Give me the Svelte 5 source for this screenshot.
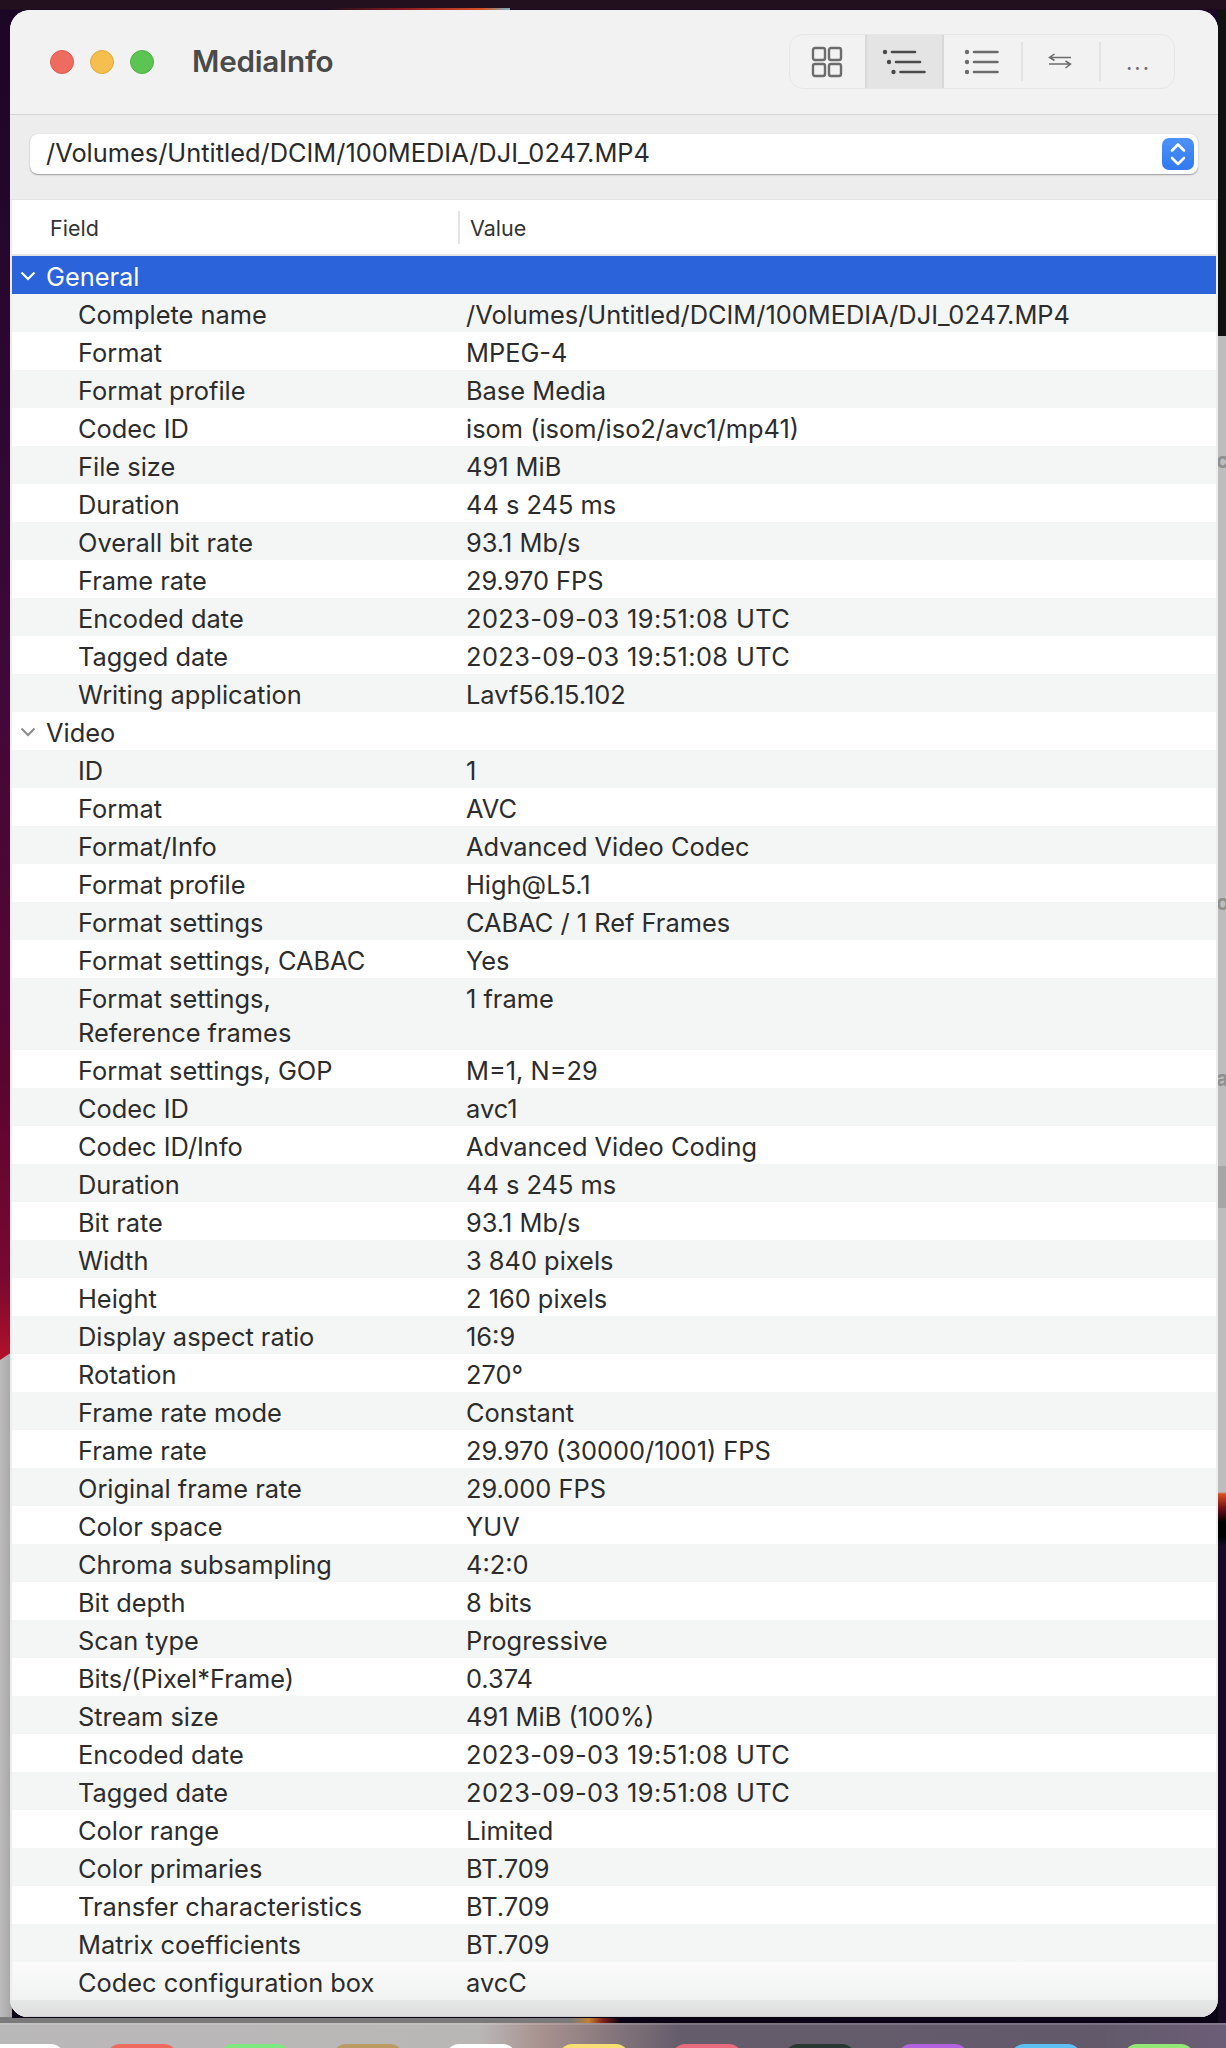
<script>
  const general = [
    ["Complete name", "/Volumes/Untitled/DCIM/100MEDIA/DJI_0247.MP4"],
    ["Format", "MPEG-4"],
    ["Format profile", "Base Media"],
    ["Codec ID", "isom (isom/iso2/avc1/mp41)"],
    ["File size", "491 MiB"],
    ["Duration", "44 s 245 ms"],
    ["Overall bit rate", "93.1 Mb/s"],
    ["Frame rate", "29.970 FPS"],
    ["Encoded date", "2023-09-03 19:51:08 UTC"],
    ["Tagged date", "2023-09-03 19:51:08 UTC"],
    ["Writing application", "Lavf56.15.102"]
  ]
  const video = [
    ["ID", "1"],
    ["Format", "AVC"],
    ["Format/Info", "Advanced Video Codec"],
    ["Format profile", "High@L5.1"],
    ["Format settings", "CABAC / 1 Ref Frames"],
    ["Format settings, CABAC", "Yes"],
    ["Format settings,\nReference frames", "1 frame"],
    ["Format settings, GOP", "M=1, N=29"],
    ["Codec ID", "avc1"],
    ["Codec ID/Info", "Advanced Video Coding"],
    ["Duration", "44 s 245 ms"],
    ["Bit rate", "93.1 Mb/s"],
    ["Width", "3 840 pixels"],
    ["Height", "2 160 pixels"],
    ["Display aspect ratio", "16:9"],
    ["Rotation", "270°"],
    ["Frame rate mode", "Constant"],
    ["Frame rate", "29.970 (30000/1001) FPS"],
    ["Original frame rate", "29.000 FPS"],
    ["Color space", "YUV"],
    ["Chroma subsampling", "4:2:0"],
    ["Bit depth", "8 bits"],
    ["Scan type", "Progressive"],
    ["Bits/(Pixel*Frame)", "0.374"],
    ["Stream size", "491 MiB (100%)"],
    ["Encoded date", "2023-09-03 19:51:08 UTC"],
    ["Tagged date", "2023-09-03 19:51:08 UTC"],
    ["Color range", "Limited"],
    ["Color primaries", "BT.709"],
    ["Transfer characteristics", "BT.709"],
    ["Matrix coefficients", "BT.709"],
    ["Codec configuration box", "avcC"]
  ]
  const dock = ["#ffffff", "#ee6a5e", "#7fe77f", "#b89a62", "#ffffff", "#f8de74", "#ea6a7e", "#2a3833", "#b264e0", "#5cc0f4", "#93e874"]
</script>

<div class="desktop">
  <div class="glow"></div>
  <div class="backleft"></div>
  <div class="glow2"></div>
  <div class="backright">
    <span class="frag f1">c</span>
    <span class="frag f2">o</span>
    <span class="frag f3">a</span>
  </div>

  <div class="window">
    <div class="titlebar">
      <div class="lights">
        <i class="red"></i><i class="yellow"></i><i class="green"></i>
      </div>
      <div class="title">MediaInfo</div>
      <div class="segments">
        <div class="seg grid">
          <svg width="32" height="32" viewBox="0 0 32 32" fill="none" stroke="#6c6c6c" stroke-width="2.4">
            <rect x="2" y="2" width="12" height="12" rx="2" />
            <rect x="18" y="2" width="12" height="12" rx="2" />
            <rect x="2" y="18" width="12" height="12" rx="2" />
            <rect x="18" y="18" width="12" height="12" rx="2" />
          </svg>
        </div>
        <div class="seg on">
          <svg width="44" height="32" viewBox="0 0 44 32" fill="#4a4a4a" stroke="#4a4a4a" stroke-linecap="round">
            <circle cx="3" cy="6" r="2.200" stroke="none" />
            <circle cx="7" cy="16" r="2.200" stroke="none" />
            <circle cx="11.500" cy="26" r="2.200" stroke="none" />
            <path d="M10 6H33M14 16H38M18.500 26H42.500" stroke-width="2.600" fill="none" />
          </svg>
        </div>
        <div class="seg plain">
          <svg width="36" height="32" viewBox="0 0 36 32" fill="#6c6c6c" stroke="#6c6c6c" stroke-linecap="round">
            <circle cx="3" cy="6" r="2.200" stroke="none" />
            <circle cx="3" cy="16" r="2.200" stroke="none" />
            <circle cx="3" cy="26" r="2.200" stroke="none" />
            <path d="M10 6H33.500M10 16H33.500M10 26H33.500" stroke-width="2.600" fill="none" />
          </svg>
        </div>
        <div class="seg short">
          <svg width="24" height="18" viewBox="0 0 24 18" fill="none" stroke="#6c6c6c" stroke-width="1.500">
            <path d="M23 4.500H1.500M6.500 1L1.500 4.500L6.500 7.500" />
            <path d="M1 11H22.500M17.500 8L22.500 11L17.500 15" />
          </svg>
        </div>
        <div class="seg dots">...</div>
      </div>
    </div>

    <div class="pathbar">
      <div class="select">
        <span>/Volumes/Untitled/DCIM/100MEDIA/DJI_0247.MP4</span>
        <div class="stepper">
          <svg width="18" height="26" viewBox="0 0 18 26" fill="none" stroke="#fff" stroke-width="2.600" stroke-linecap="round" stroke-linejoin="round">
            <path d="M3 9.500L9 3.500L15 9.500M3 17L9 23L15 17" />
          </svg>
        </div>
      </div>
    </div>

    <div class="table">
      <div class="head">
        <div class="hfield">Field</div>
        <div class="hvalue">Value</div>
      </div>

      <div class="group selected">
        <svg width="16" height="10" viewBox="0 0 16 10" fill="none" stroke="#fff" stroke-width="2.200"><path d="M1.500 1.500L8 8L14.500 1.500" /></svg>
        General
      </div>
      {#each general as [k, v], i}
        <div class="row" class:alt={i % 2 == 0}>
          <div class="k">{k}</div>
          <div class="v" class:date={v.endsWith("UTC")}>{v}</div>
        </div>
      {/each}

      <div class="group">
        <svg width="16" height="10" viewBox="0 0 16 10" fill="none" stroke="#8b8b8b" stroke-width="2"><path d="M1.500 1.500L8 8L14.500 1.500" /></svg>
        Video
      </div>
      {#each video as [k, v], i}
        <div class="row" class:alt={i % 2 == 0} class:last={i == video.length - 1}>
          <div class="k">{k}</div>
          <div class="v" class:date={v.endsWith("UTC")}>{v}</div>
        </div>
      {/each}
      <div class="foot"></div>
    </div>
  </div>

  <div class="dock">
    {#each dock as c}
      <div class="app" style="background: {c}"></div>
    {/each}
  </div>
</div>

<style>
  :global(body) {
    margin: 0;
    background: #000;
  }
  .desktop {
    position: relative;
    width: 1226px;
    height: 2048px;
    overflow: hidden;
    padding-top: 10px;
    box-sizing: border-box;
    font-family: Inter, "Liberation Sans", sans-serif;
    background: linear-gradient(180deg, #22101f 0, #22101f 9px, #1c0626 10px, #2d0733 400px, #40083a 680px, #5a0530 1080px, #7a0830 1280px, #b0102a 1356px, #0a0414 1400px);
  }
  .glow {
    position: absolute;
    left: 330px;
    top: 8px;
    width: 180px;
    height: 2px;
    background: linear-gradient(90deg, #22101f, #8a1a20 40%, #d8502a 85%, #7ab0c0);
  }
  .glow2 {
    position: absolute;
    left: 572px;
    top: 2018px;
    width: 48px;
    height: 5px;
    background: linear-gradient(90deg, #7a7a7a, #c08030 35%, #802018 65%, #0a0414);
  }
  .backleft {
    position: absolute;
    inset: 0;
    background: linear-gradient(180deg, transparent 2017px, #7a7a7a 2017px), linear-gradient(90deg, #bcbcbc 0, #a9a9a9 10px, #a9a9a9 12px, #bcbcbc 12px);
    clip-path: polygon(0 1360px, 12px 1352px, 12px 2018px, 580px 2018px, 600px 2023px, 0 2048px);
  }
  .backright {
    position: absolute;
    left: 1218px;
    top: 10px;
    width: 8px;
    height: 2013px;
    overflow: hidden;
    background: linear-gradient(180deg, #111 0, #111 326px, #bdbdbd 326px, #bdbdbd 1156px, #a6a6a6 1156px, #a6a6a6 1198px, #bdbdbd 1198px, #bdbdbd 1482px, #d8501f 1484px, #701018 1498px, #000 1512px, #000 1526px, #170a22 1536px);
  }
  .frag {
    position: absolute;
    left: -2px;
    font-size: 22px;
    font-weight: 700;
    line-height: 24px;
    color: #8f8f8f;
  }
  .f1 {
    top: 438px;
  }
  .f2 {
    top: 880px;
  }
  .f3 {
    top: 1056px;
  }
  .window {
    position: relative;
    margin-left: 10px;
    width: 1208px;
    height: 2007px;
    border-radius: 20px 20px 18px 18px;
    overflow: hidden;
    background: #eeedee;
    display: flex;
    flex-direction: column;
  }
  .titlebar {
    height: 105px;
    flex: none;
    box-sizing: border-box;
    background: #f3f2f3;
    border-bottom: 1.5px solid #d6d5d6;
    display: flex;
    align-items: flex-start;
    padding-left: 40px;
  }
  .lights {
    display: flex;
    gap: 16px;
    margin-top: 40px;
  }
  .lights i {
    display: block;
    width: 24px;
    height: 24px;
    border-radius: 50%;
    box-sizing: border-box;
  }
  .red {
    background: #ef6b60;
    border: 1px solid #de5a50;
  }
  .yellow {
    background: #f6bd4f;
    border: 1px solid #e2a93f;
  }
  .green {
    background: #5cc453;
    border: 1px solid #50b048;
  }
  .title {
    margin-left: 38px;
    margin-top: 33px;
    font-size: 29.700px;
    line-height: 36px;
    font-weight: 600;
    color: #4a4a4a;
    letter-spacing: -0.25px;
  }
  .segments {
    margin-left: auto;
    margin-right: 43px;
    margin-top: 24px;
    width: 386px;
    height: 55px;
    box-sizing: border-box;
    border: 1.5px solid #e7e6e7;
    border-radius: 14px;
    display: flex;
    overflow: hidden;
  }
  .seg {
    flex: none;
    display: flex;
    align-items: center;
    justify-content: center;
    position: relative;
    box-sizing: border-box;
  }
  .grid {
    width: 74.500px;
  }
  .seg.on {
    width: 79px;
    background: #e5e4e5;
    border-left: 2px solid #d9d8d9;
    border-right: 2px solid #d9d8d9;
  }
  .plain {
    width: 77px;
  }
  .short {
    width: 78px;
  }
  .seg.short::before,
  .seg.dots::before {
    content: "";
    position: absolute;
    left: 0;
    top: 7px;
    bottom: 7px;
    width: 2px;
    background: #e4e3e4;
  }
  .seg.dots {
    width: 75px;
    font-size: 22px;
    line-height: 22px;
    letter-spacing: 2px;
    color: #6c6c6c;
    padding-left: 5px;
  }
  .pathbar {
    flex: none;
    height: 85px;
    box-sizing: border-box;
    padding: 19px 20px 0;
    border-bottom: 1px solid #e3e3e3;
  }
  .select {
    height: 40px;
    background: #fff;
    border-radius: 8px;
    box-shadow: 0 1px 1.5px rgba(0, 0, 0, 0.35), 0 0 1px rgba(0, 0, 0, 0.15);
    display: flex;
    align-items: center;
    justify-content: space-between;
    padding: 0 4px 0 16px;
    font-size: 25.400px;
    color: #2a2a2a;
  }
  .select span {
    margin-bottom: 3px;
  }
  .stepper {
    width: 32px;
    height: 32px;
    border-radius: 7px;
    background: linear-gradient(180deg, #4d92f9, #3079f0);
    display: flex;
    align-items: center;
    justify-content: center;
  }
  .table {
    flex: 1;
    margin: 0 2px;
    background: #fff;
    position: relative;
    font-size: 25.400px;
    color: #2c2c2c;
  }
  .head {
    height: 54px;
    box-sizing: border-box;
    display: flex;
    align-items: center;
    font-size: 21.500px;
    color: #333;
  }
  .hfield {
    width: 446px;
    box-sizing: border-box;
    padding-left: 38px;
    padding-top: 2px;
  }
  .hvalue {
    border-left: 2px solid #e4e4e4;
    padding-left: 10px;
    line-height: 32px;
    padding-top: 1px;
  }
  .group {
    height: 38px;
    box-sizing: border-box;
    display: flex;
    align-items: center;
    padding-left: 8px;
    padding-top: 4px;
    gap: 10px;
    line-height: 34px;
  }
  .group svg {
    margin-top: -3px;
  }
  .group.selected {
    margin-top: 2px;
    box-shadow: 0 -2px 0 #e6e6e6;
    background: #2b63db;
    color: #fff;
  }
  .row {
    display: flex;
    padding: 4px 0 0 66px;
    line-height: 34px;
  }
  .row.alt {
    background: #f4f5f5;
  }
  .row.last {
    background: linear-gradient(180deg, #fbfbfb, #f1f2f2);
  }
  .k {
    width: 388px;
    flex: none;
    white-space: pre-line;
  }
  .date {
    letter-spacing: 0.4px;
  }
  .foot {
    height: 18px;
    box-sizing: border-box;
    background: linear-gradient(180deg, #e6e7e7, #dddedd);
    border-bottom: 2px solid #cfcfcf;
    margin: 0 -2px;
  }
  .dock {
    position: absolute;
    left: 0;
    right: 0;
    top: 2023px;
    height: 25px;
    box-sizing: border-box;
    border-top: 2px solid rgba(255, 255, 255, 0.15);
    padding-top: 19px;
    display: flex;
    gap: 43px;
    overflow: hidden;
    background: linear-gradient(90deg, #b9b8b8 0, #b9b6b6 480px, #a8928f 540px, #655c6b 680px, #625a6b 1100px, #6c5d76 1226px);
  }
  .app {
    width: 70px;
    height: 20px;
    flex: none;
    border-radius: 13px 13px 0 0;
  }
  .app:first-child {
    width: 64px;
    border-top-left-radius: 0;
  }
</style>
